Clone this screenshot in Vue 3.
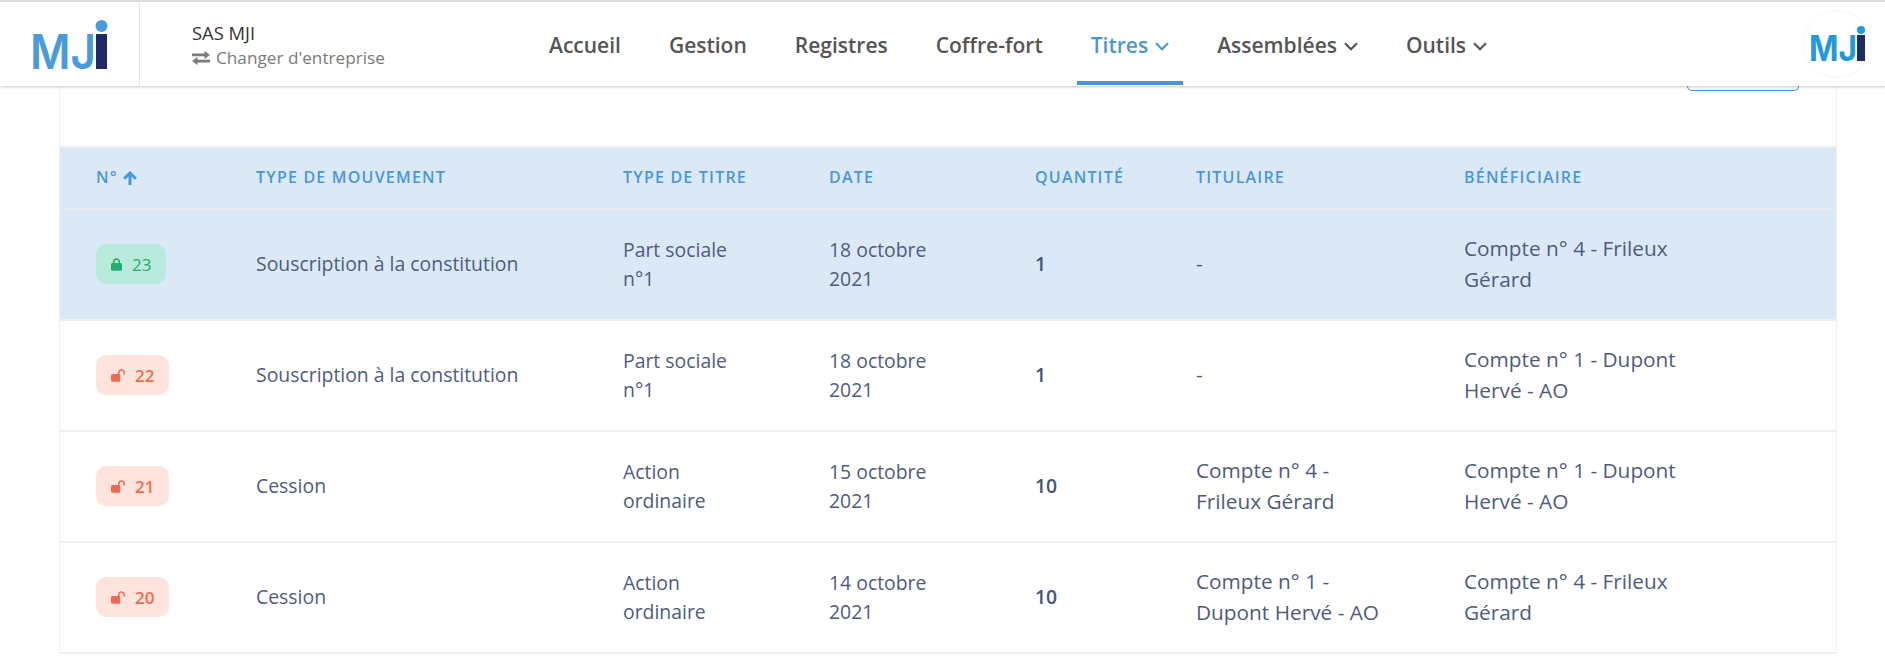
<script setup>
const nav = [
  { label: 'Accueil' },
  { label: 'Gestion' },
  { label: 'Registres' },
  { label: 'Coffre-fort' },
  { label: 'Titres', caret: true, active: true },
  { label: 'Assemblées', caret: true },
  { label: 'Outils', caret: true },
]
const columns = ['Type de mouvement', 'Type de titre', 'Date', 'Quantité', 'Titulaire', 'Bénéficiaire']
const rows = [
  { n: 23, locked: true, selected: true, type: 'Souscription à la constitution', titre: 'Part sociale n°1', date: '18 octobre 2021', qty: 1, titulaire: '-', benef: 'Compte n° 4 - Frileux Gérard' },
  { n: 22, type: 'Souscription à la constitution', titre: 'Part sociale n°1', date: '18 octobre 2021', qty: 1, titulaire: '-', benef: 'Compte n° 1 - Dupont Hervé - AO' },
  { n: 21, type: 'Cession', titre: 'Action ordinaire', date: '15 octobre 2021', qty: 10, titulaire: 'Compte n° 4 - Frileux Gérard', benef: 'Compte n° 1 - Dupont Hervé - AO' },
  { n: 20, type: 'Cession', titre: 'Action ordinaire', date: '14 octobre 2021', qty: 10, titulaire: 'Compte n° 1 - Dupont Hervé - AO', benef: 'Compte n° 4 - Frileux Gérard' },
]
</script>

<template>
  <div class="page">
    <header class="navbar">
      <div class="brand">
        <svg class="logo" viewBox="0 0 78 50" width="78" height="50">
          <text x="0" y="49" class="logo-text" fill="#4a9bdc" textLength="66" lengthAdjust="spacingAndGlyphs">MJ</text>
          <rect x="66" y="14" width="11" height="35" fill="#1f2a66" />
          <circle cx="71.5" cy="6" r="6" fill="#4a9bdc" />
        </svg>
      </div>
      <div class="company">
        <div class="company-name">SAS MJI</div>
        <div class="company-switch">
          <svg viewBox="0 0 18 14" width="18" height="14" fill="#7a7a7a">
            <path d="M0 3h12.5V0.3L18 4.4l-5.5 4V5.6H0z" transform="translate(0 -0.4)" />
            <path d="M18 11H5.5v2.7L0 9.6l5.5-4v2.8H18z" transform="translate(0 0.4)" />
          </svg>
          <span>Changer d'entreprise</span>
        </div>
      </div>
      <nav class="menu">
        <a v-for="item in nav" :key="item.label" class="menu-item" :class="{ active: item.active }">
          {{ item.label }}
          <svg v-if="item.caret" class="caret" viewBox="0 0 14 9" width="14" height="9" fill="none">
            <path d="M1 1.2l6 6 6-6" stroke="currentColor" stroke-width="2.2" />
          </svg>
        </a>
      </nav>
      <div class="avatar">
        <svg viewBox="0 0 56 36" width="56" height="36">
          <text x="0" y="35" class="logo-small" fill="#2299dd" textLength="48" lengthAdjust="spacingAndGlyphs">MJ</text>
          <rect x="48" y="9" width="8" height="26" fill="#1f2a66" />
          <circle cx="52" cy="4" r="4" fill="#2299dd" />
        </svg>
      </div>
    </header>

    <main class="card">
      <div class="toolbar"><button class="tool-btn" type="button"></button></div>
      <table class="table">
        <colgroup>
          <col class="c0" /><col class="c1" /><col class="c2" /><col class="c3" /><col class="c4" /><col class="c5" /><col />
        </colgroup>
        <thead>
          <tr>
            <th>
              N°
              <svg class="sort" viewBox="0 0 14 14" width="14" height="14" fill="none">
                <path d="M7 14V2.5M1.2 7.8L7 2l5.8 5.8" stroke="currentColor" stroke-width="3" />
              </svg>
            </th>
            <th v-for="c in columns" :key="c">{{ c }}</th>
          </tr>
        </thead>
        <tbody>
          <tr v-for="r in rows" :key="r.n" :class="{ selected: r.selected }">
            <td>
              <span class="badge" :class="r.locked ? 'green' : 'red'">
                <svg v-if="r.locked" viewBox="0 0 448 512" width="11" height="13" fill="currentColor">
                  <path d="M144 144v48H304V144c0-44.2-35.8-80-80-80s-80 35.8-80 80zM80 192V144C80 64.5 144.5 0 224 0s144 64.5 144 144v48h16c35.3 0 64 28.7 64 64V448c0 35.3-28.7 64-64 64H64c-35.3 0-64-28.7-64-64V256c0-35.3 28.7-64 64-64H80z" />
                </svg>
                <svg v-else viewBox="0 0 576 512" width="14" height="13" fill="currentColor">
                  <path d="M352 144c0-44.2 35.8-80 80-80s80 35.8 80 80v48c0 17.7 14.3 32 32 32s32-14.3 32-32V144C576 64.5 511.5 0 432 0S288 64.5 288 144v48H64c-35.3 0-64 28.7-64 64V448c0 35.3 28.7 64 64 64H320c35.3 0 64-28.7 64-64V256c0-35.3-28.7-64-64-64H352V144z" />
                </svg>
                {{ r.n }}
              </span>
            </td>
            <td>{{ r.type }}</td>
            <td>{{ r.titre }}</td>
            <td>{{ r.date }}</td>
            <td class="qty">{{ r.qty }}</td>
            <td class="account">{{ r.titulaire }}</td>
            <td class="account last">{{ r.benef }}</td>
          </tr>
        </tbody>
      </table>
    </main>
  </div>
</template>

<style>
html, body { margin: 0; background: #fff; overflow: hidden; }
</style>

<style scoped>
.page {
  height: 658px;
  overflow: hidden;
  font-family: "Open Sans", "Liberation Sans", sans-serif;
}
.navbar {
  position: relative;
  z-index: 2;
  box-sizing: border-box;
  height: 86px;
  display: flex;
  align-items: stretch;
  background: #fff;
  border-top: 2px solid #dcdcdc;
  box-shadow: 0 1px 3px rgba(0, 0, 0, 0.22);
}
.brand {
  box-sizing: border-box;
  width: 140px;
  border-right: 1px solid #e6e6e6;
  display: flex;
  align-items: flex-start;
  padding-left: 30px;
  padding-top: 18px;
}
.logo { display: block; overflow: visible; }
.logo-text {
  font-family: "Inter", sans-serif;
  font-weight: 600;
  font-size: 48px;
}
.logo-small {
  font-family: "Inter", sans-serif;
  font-weight: 700;
  font-size: 36px;
}
.company {
  width: 336px;
  padding-left: 52px;
  box-sizing: border-box;
  padding-top: 19px;
}
.company-name {
  font-size: 18.4px;
  line-height: 24px;
  color: #363636;
}
.company-switch {
  display: flex;
  align-items: center;
  gap: 6px;
  font-size: 17.2px;
  line-height: 26px;
  color: #7a7a7a;
}
.menu {
  display: flex;
  gap: 20px;
  align-items: stretch;
  padding-left: 59px;
}
.menu-item {
  box-sizing: border-box;
  display: flex;
  align-items: center;
  gap: 7px;
  padding: 6px 14px 0;
  height: 83px;
  border-bottom: 4px solid transparent;
  font-size: 21px;
  font-weight: 600;
  color: #555;
}
.menu-item.active {
  color: #4a97d8;
  border-bottom-color: #4a97d8;
}
.caret { margin-top: 3px; }
.avatar {
  position: absolute;
  right: 14px;
  top: 8px;
  box-sizing: border-box;
  width: 68px;
  height: 68px;
  border: 1px solid #f6f6f6;
  border-radius: 50%;
  display: flex;
  align-items: center;
  justify-content: center;
}
.avatar svg { overflow: visible; }
.card {
  box-sizing: border-box;
  width: 1778px;
  margin: 0 0 0 59px;
  border-left: 1px solid #eef0f3;
  border-right: 1px solid #eef0f3;
}
.toolbar {
  height: 60px;
  padding-right: 37px;
  display: flex;
  justify-content: flex-end;
}
.tool-btn {
  box-sizing: border-box;
  width: 112px;
  height: 5px;
  border: 1px solid #4a90d2;
  border-top: 0;
  border-radius: 0 0 9px 9px;
  background: #fff;
  padding: 0;
}
.table {
  width: 100%;
  border-collapse: collapse;
  table-layout: fixed;
}
.c0 { width: 160px; }
.c1 { width: 367px; }
.c2 { width: 206px; }
.c3 { width: 206px; }
.c4 { width: 161px; }
.c5 { width: 268px; }
th {
  height: 58px;
  padding: 0 0 2px 36px;
  text-align: left;
  font-size: 16px;
  font-weight: 600;
  letter-spacing: 1.2px;
  text-transform: uppercase;
  color: #4a97d8;
  background: #dbe9f6;
  border-top: 2px solid #eceff3;
  border-bottom: 2px solid #e6ebf0;
  white-space: nowrap;
}
.sort { vertical-align: -2px; }
td {
  box-sizing: border-box;
  height: 111px;
  padding: 0 36px;
  font-size: 19.4px;
  line-height: 28.8px;
  color: #4f5b7f;
  border-bottom: 2px solid #eceff3;
}
td.account { font-size: 20.8px; line-height: 30.7px; padding-bottom: 2px; }
td.last { padding-right: 122px; }
tr.selected td { background: #dbe9f6; }
.qty { font-weight: 600; color: #47537a; }
.badge {
  display: inline-flex;
  align-items: center;
  gap: 10px;
  height: 40px;
  margin-bottom: 1px;
  padding: 0 15px;
  border-radius: 10px;
  font-size: 17px;
  line-height: 1;
  white-space: nowrap;
  vertical-align: middle;
}
.badge.green { color: #1fae6c; background: #b9ebdc; }
.badge.red { color: #ee6c4d; background: #ffe4de; font-weight: 600; }
</style>
